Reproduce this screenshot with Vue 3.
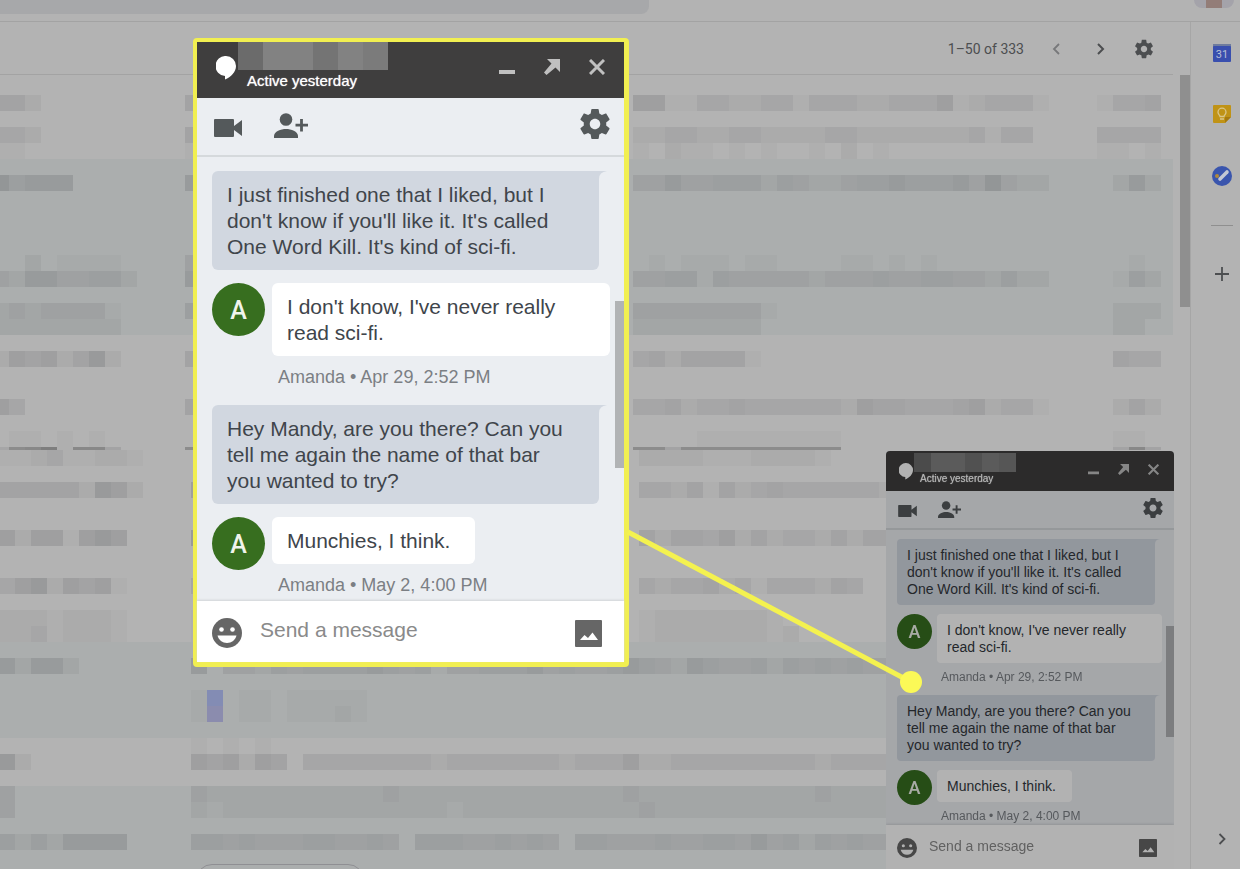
<script setup>
// The middle of the subject line is covered by the enlarged chat, so it holds no shades.
const hidden = (first, visible) => first + '0'.repeat(27) + visible

// Each band is one line of redacted text: sender / subject / date shades, 0 (none) to 8 (dark).
const upper = [
  {},
  { s: '442', t: hidden('4', '55113322331333223335123331'), d: '1334' },
  {},
  { s: '332', t: hidden('4', '2233223322223322222223133'), d: '3333' },
  { s: '11', t: hidden('1', '1021101010010201'), d: '1101' },
  { r: 1 },
  { s: '64555', t: hidden('5', '33533444243223445444536322'), d: '0252', r: 1 },
  { r: 1 },
  { r: 1 },
  { r: 1 },
  { r: 1 },
  { s: '00201111', t: hidden('3', '01011101100001101010'), d: '0010', r: 1 },
  { s: '325533442', t: hidden('5', '33441433333233343344332422'), d: '0142', r: 1 },
  { r: 1 },
  { s: '23233331', t: hidden('4', '333333331'), d: '0222', r: 1 },
  { s: '22222222', t: hidden('0', '222222220'), d: '0220', r: 1 },
  {},
  { s: '25452462', t: hidden('4', '34244441'), d: '0433' },
  {},
  {},
  { s: '53', t: hidden('4', '33423343333332544333452331'), d: '0242' },
  {},
  { s: '01101010', t: hidden('0', '00001111111110'), d: '0110' },
  { s: '36781774', t: hidden('6', '5545665665555'), d: '0474', thin: 1 }
]
const lower = [
  { s: '112311221', t: hidden('0', '222211122221') },
  {},
  { s: '444442652', t: hidden('5', '3324142343333332') },
  {},
  {},
  { s: '52551565', t: hidden('6', '4244352423324244') },
  {},
  {},
  { s: '35625451', t: hidden('3', '323342313332430') },
  {},
  { s: '22212221', t: hidden('1', '122222221000') },
  { s: '22312221', t: hidden('1', '122222221200') },
  { r: 1 },
  { r: 1, s: '52552', t: '503324344445434133444534334543254334243434334' },
  { r: 1 },
  { r: 1, t: '1b0110111110' },
  { r: 1, t: '1c0110111210' },
  { r: 1 },
  { t: '10101' },
  { s: '62', t: '545254033333333233333332333522333333333233333' },
  {},
  { r: 1, s: '3', t: '322222222222322222222222222322222222222322222' },
  { r: 1, s: '3', t: '212222222222222212222222222232222222222222222' },
  { r: 1 },
  { r: 1, s: '42425555', t: '443433344334304443343430443334334435342434334' }
]
const groups = [
  { name: 'upper', bands: upper },
  { name: 'lower', bands: lower }
]

const messages = [
  { mine: true, lines: ['I just finished one that I liked, but I', "don't know if you'll like it. It's called", "One Word Kill. It's kind of sci-fi."] },
  { lines: ["I don't know, I've never really", 'read sci-fi.'], meta: 'Amanda • Apr 29, 2:52 PM' },
  { mine: true, lines: ['Hey Mandy, are you there? Can you', 'tell me again the name of that bar', 'you wanted to try?'] },
  { lines: ['Munchies, I think.'], meta: 'Amanda • May 2, 4:00 PM' }
]
const chats = ['small', 'large']
const gear =
  'M19.43 12.98c.04-.32.07-.64.07-.98s-.03-.66-.07-.98l2.11-1.65c.19-.15.24-.42.12-.64l-2-3.46c-.12-.22-.39-.3-.61-.22l-2.49 1c-.52-.4-1.08-.73-1.69-.98l-.38-2.65C14.46 2.18 14.25 2 14 2h-4c-.25 0-.46.18-.49.42l-.38 2.65c-.61.25-1.17.59-1.69.98l-2.49-1c-.23-.09-.49 0-.61.22l-2 3.46c-.13.22-.07.49.12.64l2.11 1.65c-.04.32-.07.65-.07.98s.03.66.07.98l-2.11 1.65c-.19.15-.24.42-.12.64l2 3.46c.12.22.39.3.61.22l2.49-1c.52.4 1.08.73 1.69.98l.38 2.65c.03.24.24.42.49.42h4c.25 0 .46-.18.49-.42l.38-2.65c.61-.25 1.17-.59 1.69-.98l2.49 1c.23.09.49 0 .61-.22l2-3.46c.12-.22.07-.49-.12-.64l-2.11-1.65zM12 15.5c-1.93 0-3.5-1.57-3.5-3.5s1.57-3.5 3.5-3.5 3.5 1.57 3.5 3.5-1.57 3.5-3.5 3.5z'
</script>

<template>
  <div class="page">
    <header class="topbar">
      <div class="search"></div>
      <div class="account"></div>
    </header>
    <div class="body">
      <main class="mail">
        <div class="pager">
          <span class="count">1–50 of 333</span>
          <button class="ib dim" aria-label="Newer">
            <svg width="24" height="24" viewBox="0 0 24 24"><path d="M14 7l-5 5 5 5" fill="none" stroke="currentColor" stroke-width="1.8" /></svg>
          </button>
          <button class="ib" aria-label="Older">
            <svg width="24" height="24" viewBox="0 0 24 24"><path d="M9 7l5 5-5 5" fill="none" stroke="currentColor" stroke-width="2" /></svg>
          </button>
          <button class="ib" aria-label="Settings">
            <svg width="22" height="22" viewBox="0 0 24 24"><path :d="gear" fill="currentColor" /></svg>
          </button>
        </div>
        <div class="list">
          <div class="rows">
            <div v-for="g in groups" :key="g.name" :class="g.name">
              <div v-for="(b, i) in g.bands" :key="i" class="band" :class="{ read: b.r, thin: b.thin }">
                <div class="sender"><i v-for="(c, k) in b.s || ''" :key="k" :class="'s' + c"></i></div>
                <div class="subject"><i v-for="(c, k) in b.t || ''" :key="k" :class="'s' + c"></i></div>
                <div class="date"><i v-for="(c, k) in b.d || ''" :key="k" :class="'s' + c"></i></div>
              </div>
            </div>
            <div class="chiprow"><div class="chip"></div></div>
          </div>
          <div class="scroll"></div>
        </div>
      </main>
      <aside class="side">
        <button class="ib" aria-label="Calendar">
          <svg width="20" height="20" viewBox="0 0 20 20">
            <rect x="1" y="1" width="18" height="4" fill="#6f7c9e" />
            <rect x="1" y="3" width="18" height="16" rx="1" fill="#394fae" />
            <text x="10" y="15" text-anchor="middle" font-size="11" fill="#b9c0d6">31</text>
          </svg>
        </button>
        <button class="ib" aria-label="Keep">
          <svg width="20" height="20" viewBox="0 0 20 20">
            <path d="M1 2a1 1 0 0 1 1-1h16a1 1 0 0 1 1 1v11l-6 6H2a1 1 0 0 1-1-1z" fill="#c09316" />
            <path d="M19 13h-6v6z" fill="#a57a10" />
            <path d="M8 12.500c0-1.500-2-2-2-4.300a4 4 0 0 1 8 0c0 2.300-2 2.800-2 4.300zM8 15h4" fill="none" stroke="#d9c68a" stroke-width="1.300" />
          </svg>
        </button>
        <button class="ib" aria-label="Tasks">
          <svg width="22" height="22" viewBox="0 0 22 22">
            <circle cx="11" cy="11" r="10" fill="#3a55ad" />
            <circle cx="6" cy="11" r="2" fill="#b08a3c" />
            <path d="M9 14l7-7" stroke="#c3c8d4" stroke-width="3.600" stroke-linecap="round" />
          </svg>
        </button>
        <hr />
        <button class="ib" aria-label="Get add-ons">
          <svg width="14" height="14" viewBox="0 0 14 14"><path d="M7 0v14M0 7h14" stroke="currentColor" stroke-width="1.800" /></svg>
        </button>
        <button class="ib expand" aria-label="Hide side panel">
          <svg width="24" height="24" viewBox="0 0 24 24"><path d="M9.500 7l5 5-5 5" fill="none" stroke="currentColor" stroke-width="1.800" /></svg>
        </button>
      </aside>
    </div>

    <section v-for="size in chats" :key="size" class="chat" :class="size">
      <header class="head">
        <svg class="logo" viewBox="0 0 20 24"><path d="M10 0a10 10 0 0 1 10 10c0 6-5 11-11 13.500V20A10 10 0 0 1 10 0z" fill="#fff" /></svg>
        <div class="who">
          <div class="name"><i></i><i></i><i></i><i></i><i></i><i></i></div>
          <div class="status">Active yesterday</div>
        </div>
        <button class="wb" aria-label="Minimize"><svg viewBox="0 0 16 16"><path d="M0 11h16v4H0z" fill="currentColor" /></svg></button>
        <button class="wb" aria-label="Pop out">
          <svg viewBox="0 0 16 16"><path d="M3 0h13v13l-4.500-4.500L2.500 16 0 13.500 7.500 4.500z" fill="currentColor" /></svg>
        </button>
        <button class="wb" aria-label="Close"><svg viewBox="0 0 16 16"><path d="M1 1l14 14M15 1L1 15" stroke="currentColor" stroke-width="3" /></svg></button>
      </header>
      <div class="tools">
        <button class="ib" aria-label="Video call">
          <svg class="video" viewBox="0 0 28 18"><path d="M1 0h18q1 0 1 1v6l8-6v16l-8-6v6q0 1-1 1H1q-1 0-1-1V1q0-1 1-1z" fill="currentColor" /></svg>
        </button>
        <button class="ib" aria-label="Add people">
          <svg class="people" viewBox="0 0 34 26"><circle cx="12" cy="6.500" r="6.300" fill="currentColor" /><path d="M0 25v-2c0-4.500 7-7 12-7s12 2.500 12 7v2z" fill="currentColor" /><path d="M27.500 6v12.500M21.500 12.200h12.500" stroke="currentColor" stroke-width="2.800" /></svg>
        </button>
        <button class="ib end" aria-label="Chat settings">
          <svg class="gear" viewBox="2 2 20 20"><path :d="gear" fill="currentColor" /></svg>
        </button>
      </div>
      <div class="log">
        <div v-for="(m, i) in messages" :key="i" class="msg" :class="m.mine ? 'mine' : 'theirs'">
          <div v-if="!m.mine" class="avatar">A</div>
          <div class="col">
            <p class="bubble">
              <template v-for="(l, k) in m.lines" :key="k"><br v-if="k" />{{ l }}</template>
              <svg v-if="m.mine" class="tail" viewBox="0 0 8 8"><path d="M0 0h8q-8 1-8 8z" fill="#d1d7e0" /></svg>
            </p>
            <div v-if="m.meta" class="meta">{{ m.meta }}</div>
          </div>
        </div>
        <div class="thumb"></div>
      </div>
      <div class="compose">
        <button class="ib" aria-label="Emoji">
          <svg class="emoji" viewBox="0 0 30 30">
            <circle cx="15" cy="15" r="15" fill="currentColor" />
            <circle cx="9.500" cy="11.500" r="2.300" fill="#fff" /><circle cx="20.500" cy="11.500" r="2.300" fill="#fff" />
            <path d="M5.500 17.500h19c-1 4.500-5 7.500-9.500 7.500s-8.500-3-9.500-7.500z" fill="#fff" />
          </svg>
        </button>
        <input type="text" placeholder="Send a message" aria-label="Send a message" />
        <button class="ib" aria-label="Attach photo">
          <svg class="photo" viewBox="0 0 27 27"><rect width="27" height="27" rx="1" fill="currentColor" /><path d="M5 20l4.500-5 3.500 3 4.500-5.500L23 20z" fill="#fff" /></svg>
        </button>
      </div>
    </section>

    <svg class="link" width="1240" height="869" viewBox="0 0 1240 869" aria-hidden="true">
      <path d="M628 532L911 682" stroke="#f4f24f" stroke-width="5" />
      <circle cx="911" cy="682" r="11" fill="#fbf957" />
    </svg>
  </div>
</template>

<style>
body { background: #b3b3b3; }
</style>
<style scoped>
* { box-sizing: border-box; }
.page { position: relative; display: flex; flex-direction: column; height: 100vh; overflow: hidden; background: #b3b3b3; font-family: Roboto, "Liberation Sans", sans-serif; }
button { border: 0; padding: 0; background: none; font: inherit; color: inherit; }
svg { display: block; }
.ib { color: #4c4e50; }
.topbar { flex: none; display: flex; justify-content: space-between; height: 22px; border-bottom: 1px solid #a3a3a3; }
.search { width: 52.3%; height: 14px; background: #a7a8aa; border-radius: 0 0 8px 0; }
.account { width: 40px; height: 8px; margin-right: 6px; border-radius: 0 0 20px 20px; background: linear-gradient(90deg, #a4a3aa 12px, #937d78 12px, #937d78 28px, #a4a3aa 28px); }
.body { flex: 1; display: flex; min-height: 0; }
.mail { flex: 1; display: flex; flex-direction: column; min-width: 0; }
.pager { flex: none; display: flex; align-items: center; justify-content: flex-end; gap: 20px; height: 53px; margin-right: 17px; padding: 2px 18px 0 0; border-bottom: 1px solid #a3a3a3; color: #4c4e50; }
.count { font-size: 14px; margin-right: 1px; }
.dim { color: #77787a; }
.list { flex: 1; display: flex; min-height: 0; overflow: hidden; }
.rows { flex: 1; margin-right: 7px; padding-top: 4px; min-width: 0; }
.scroll { width: 10px; height: 232px; background: #8f8f8f; }
.band { display: flex; height: 16px; overflow: hidden; }
.band.read, .chiprow { background: #abaeae; }
.band.thin { height: 3px; }
.sender { flex: none; width: 192px; }
.upper .sender { margin-left: -7px; }
.lower .sender { margin-left: -1px; }
.subject { flex: 1; min-width: 0; overflow: hidden; }
.date { flex: none; width: 64px; margin-right: 12px; }
.sender, .subject, .date { display: flex; }
.band i { flex: none; width: 16px; }
.s1 { background: rgba(72, 76, 80, .04); }
.s2 { background: rgba(72, 76, 80, .08); }
.s3 { background: rgba(72, 76, 80, .12); }
.s4 { background: rgba(72, 76, 80, .15); }
.s5 { background: rgba(72, 76, 80, .19); }
.s6 { background: rgba(72, 76, 80, .24); }
.s7 { background: rgba(60, 60, 60, .36); }
.s8 { background: rgba(60, 60, 60, .44); }
.thin .s5, .thin .s6 { background: rgba(60, 60, 60, .32); }
.sb { background: #838cb4; }
.sc { background: #8b8cae; }
.chiprow { padding: 14px 0 0 196px; }
.chip { width: 168px; height: 32px; border: 1px solid #8f8f93; border-radius: 16px; }
.side { flex: none; display: flex; flex-direction: column; align-items: center; width: 50px; padding: 21px 0 18px 13px; border-left: 1px solid #a6a6a6; }
.side .ib { flex: none; }
.side .ib + .ib { margin-top: 41px; }
.side hr { flex: none; width: 22px; height: 1px; margin: 38px 0 41px; border: 0; background: #8f8f8f; }
.side .ib.expand { margin-top: auto; }

.chat { position: absolute; display: flex; flex-direction: column; font-family: "Liberation Sans", Arial, sans-serif; background: #ebeef2; }
.small {
  --head: 40px; --tools: 39px; --compose: 44px; --pad: 11px; --fs: 14px; --lh: 17px; --meta: 12px; --av: 35px;
  --bt: 8px; --bb: 7px; --bx: 10px; --wb: 11px; --wgap: 19px; --status: 10px; --cell: 17px; --nameh: 19px; --radius: 4px; --tail: 5px;
  right: 66px; bottom: 0; width: 288px; height: 418px; filter: brightness(.7); border-radius: 4px 4px 0 0; overflow: hidden;
}
.large {
  --head: 56px; --tools: 59px; --compose: 61px; --pad: 15px; --fs: 21px; --lh: 26px; --meta: 18px; --av: 53px;
  --bt: 11px; --bb: 10px; --bx: 15px; --wb: 16px; --wgap: 29px; --status: 15px; --cell: 25px; --nameh: 28px; --radius: 6px; --tail: 8px;
  left: 193px; top: 38px; width: 436px; height: 629px; border: 5px solid #f1ef51; border-width: 4px 5px 5px 4px; border-radius: 4px;
}
.head { flex: none; display: flex; height: var(--head); padding-right: 19px; background: #3f3e3e; color: #c0c0c0; }
.logo { flex: none; width: 20px; height: 24px; margin: 14px 0 0 19px; }
.who { flex: 1; padding-left: 2px; }
.name { display: flex; height: var(--nameh); }
.name i { width: var(--cell); background: #828282; }
.name i:nth-child(1) { background: #6b6b6b; }
.name i:nth-child(4) { background: #747474; }
.name i:nth-child(6) { background: #7b7b7b; }
.status { margin-left: 9px; font-size: var(--status); line-height: 21px; color: #fff; text-shadow: 0 0 1px #ddd; white-space: nowrap; }
.wb { width: var(--wb); height: var(--wb); margin: 17px 0 0 var(--wgap); }
.wb svg { width: 100%; height: 100%; }
.small .head { padding-right: 15px; }
.small .logo { width: 14px; height: 17px; margin: 12px 0 0 13px; }
.small .who { padding: 2px 0 0 1px; }
.small .status { margin-left: 6px; line-height: 14px; }
.small .wb { margin-top: 13px; }
.tools { flex: none; display: flex; align-items: flex-start; height: var(--tools); padding: 11px 14px 0 17px; border-bottom: 2px solid #d5d9dc; }
.tools .ib { color: #54595b; }
.tools .end { margin-left: auto; }
.video { width: 28px; height: 18px; margin-top: 10px; }
.people { width: 34px; height: 26px; margin: 4px 0 0 32px; }
.gear { width: 30px; height: 30px; }
.small .tools { padding: 7px 11px 0 12px; }
.small .video { width: 19px; height: 12px; margin-top: 7px; }
.small .people { width: 23px; height: 18px; margin: 3px 0 0 21px; }
.small .gear { width: 20px; height: 20px; }
.log { position: relative; flex: 1; min-height: 0; overflow: hidden; padding: 14px 0 0 var(--pad); }
.small .log { padding-top: 9px; }
.msg { display: flex; align-items: flex-start; gap: 7px; }
.small .msg { gap: 5px; }
.bubble { position: relative; width: max-content; margin: 0; padding: var(--bt) var(--bx) var(--bb); border-radius: var(--radius); font-size: var(--fs); line-height: var(--lh); color: #40454b; background: #fff; white-space: nowrap; }
.mine .bubble { width: 387px; background: #d1d7e0; border-top-right-radius: 0; }
.theirs:nth-child(2) .bubble { width: 338px; }
.theirs:nth-child(4) .bubble { width: 203px; }
.small .mine .bubble { width: 258px; }
.small .theirs:nth-child(2) .bubble { width: 225px; }
.small .theirs:nth-child(4) .bubble { width: 135px; }
.small .bubble { color: #33383e; }
.tail { position: absolute; left: 100%; top: 0; width: var(--tail); height: var(--tail); }
.mine { margin-bottom: 13px; }
.small .mine { margin-bottom: 9px; }
.avatar { flex: none; width: var(--av); height: var(--av); border-radius: 50%; background: #376e1f; color: #f0f4ec; font: 500 25px/55px Roboto, sans-serif; text-align: center; }
.small .avatar { font-size: 18px; line-height: 36px; }
.meta { margin: 9px 0 16px 6px; font-size: var(--meta); line-height: 24px; color: #7b7f84; white-space: nowrap; }
.small .meta { margin: 6px 0 10px 4px; line-height: 16px; }
.thumb { position: absolute; right: 0; top: 144px; width: 9px; height: 167px; background: #b1b3b5; }
.small .thumb { top: 96px; width: 8px; height: 111px; }
.compose { flex: none; display: flex; align-items: center; height: var(--compose); padding: 0 22px 0 15px; background: #fff; box-shadow: 0 -1px 2px #d0d3d6; }
.compose .ib { color: #666; }
.emoji { width: 30px; height: 30px; margin-top: 3px; }
.photo { width: 27px; height: 27px; margin-top: 3px; }
.compose input { flex: 1; min-width: 0; margin-left: 18px; padding: 0 0 3px; border: 0; outline: 0; background: none; font: var(--fs) "Liberation Sans", Arial, sans-serif; }
.compose input::placeholder { color: #8a8a8a; opacity: 1; }
.small .compose { padding: 0 17px 0 11px; }
.small .compose input { margin-left: 12px; }
.small .emoji { width: 20px; height: 20px; margin-top: 1px; }
.small .photo { width: 18px; height: 18px; margin-top: 1px; }
.link { position: absolute; left: 0; top: 0; pointer-events: none; }
</style>
